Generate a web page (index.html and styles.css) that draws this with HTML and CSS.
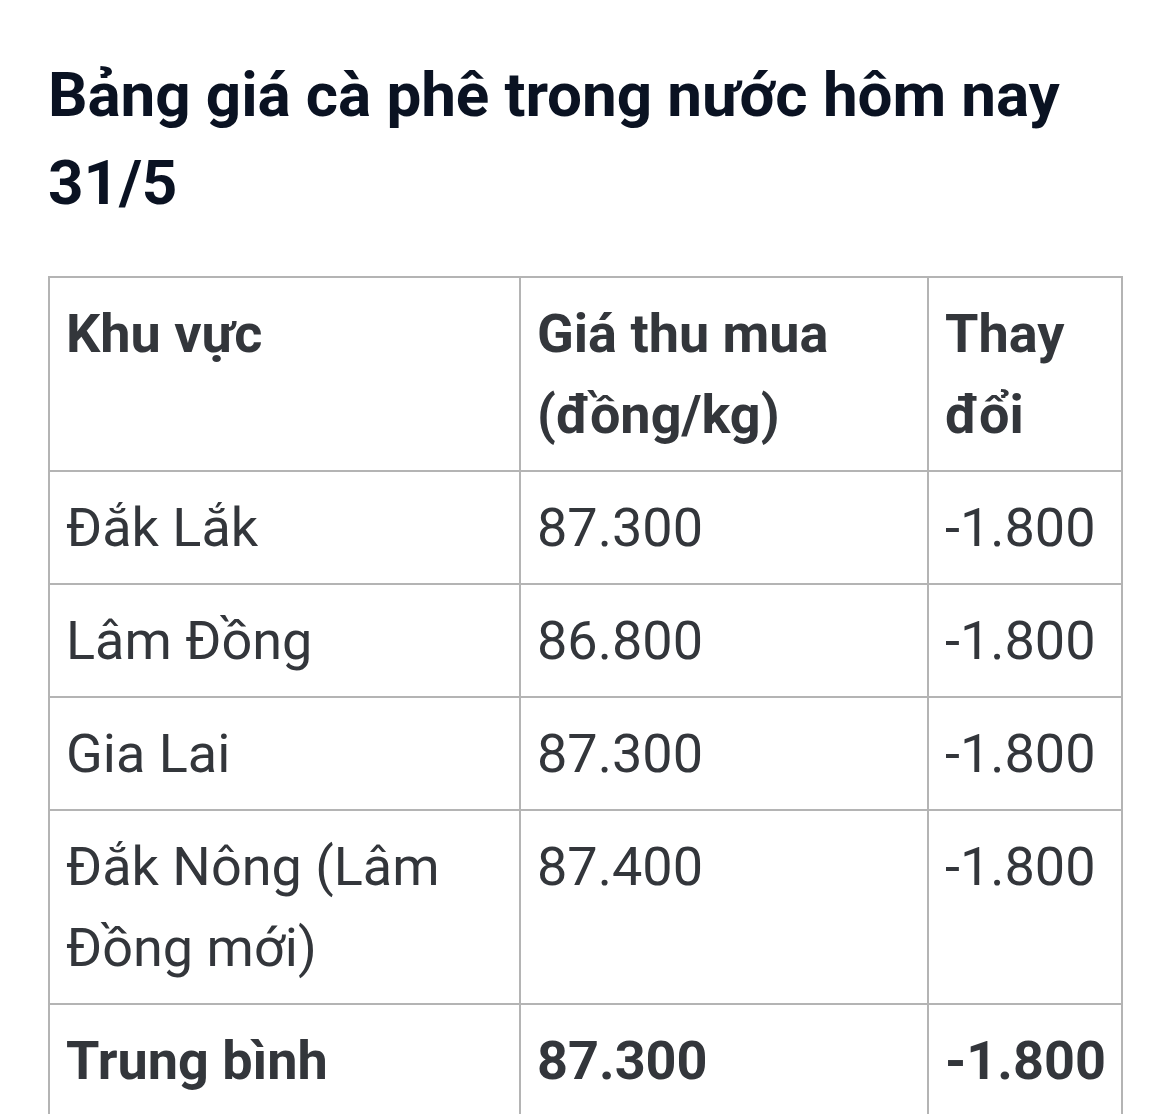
FILE: index.html
```html
<!DOCTYPE html>
<html lang="vi">
<head>
<meta charset="utf-8">
<title>Bảng giá cà phê</title>
<link rel="stylesheet" href="styles.css">
</head>
<body>
<main class="article">
  <h2 class="title">Bảng giá cà phê trong nước hôm nay 31/5</h2>
  <table class="price-table">
    <colgroup>
      <col class="c1"><col class="c2"><col class="c3">
    </colgroup>
    <thead>
      <tr><th>Khu vực</th><th>Giá thu mua (đồng/kg)</th><th>Thay đổi</th></tr>
    </thead>
    <tbody>
      <tr><td>Đắk Lắk</td><td>87.300</td><td>-1.800</td></tr>
      <tr><td>Lâm Đồng</td><td>86.800</td><td>-1.800</td></tr>
      <tr><td>Gia Lai</td><td>87.300</td><td>-1.800</td></tr>
      <tr><td>Đắk Nông (Lâm Đồng mới)</td><td>87.400</td><td>-1.800</td></tr>
      <tr class="total"><td>Trung bình</td><td>87.300</td><td>-1.800</td></tr>
    </tbody>
  </table>
</main>
</body>
</html>
```

FILE: styles.css
```css
html, body {
  margin: 0;
  padding: 0;
  background: #ffffff;
}
body {
  font-family: Roboto, "Noto Sans", sans-serif;
  overflow: hidden;
}
.article {
  padding: 51px 0 0 48px;
}
.title {
  margin: 0 0 49px 0;
  font-size: 62px;
  line-height: 88px;
  font-weight: 700;
  color: #0a1222;
  letter-spacing: -0.1px;
  max-width: 1070px;
}
.price-table {
  border-collapse: collapse;
  table-layout: fixed;
  width: 1073px;
  color: #33363b;
  font-size: 54px;
  line-height: 81px;
  border: 2px solid #d2d2d2;
}
.c1 { width: 471px; }
.c2 { width: 408px; }
.c3 { width: 194px; }
.price-table th,
.price-table td {
  border: 2px solid #b4b4b4;
  padding: 15px 15px 15px 16px;
  text-align: left;
  vertical-align: top;
}
.price-table th {
  font-weight: 700;
}
.price-table td {
  font-weight: 400;
}
.price-table tr.total td {
  font-weight: 700;
}
```
